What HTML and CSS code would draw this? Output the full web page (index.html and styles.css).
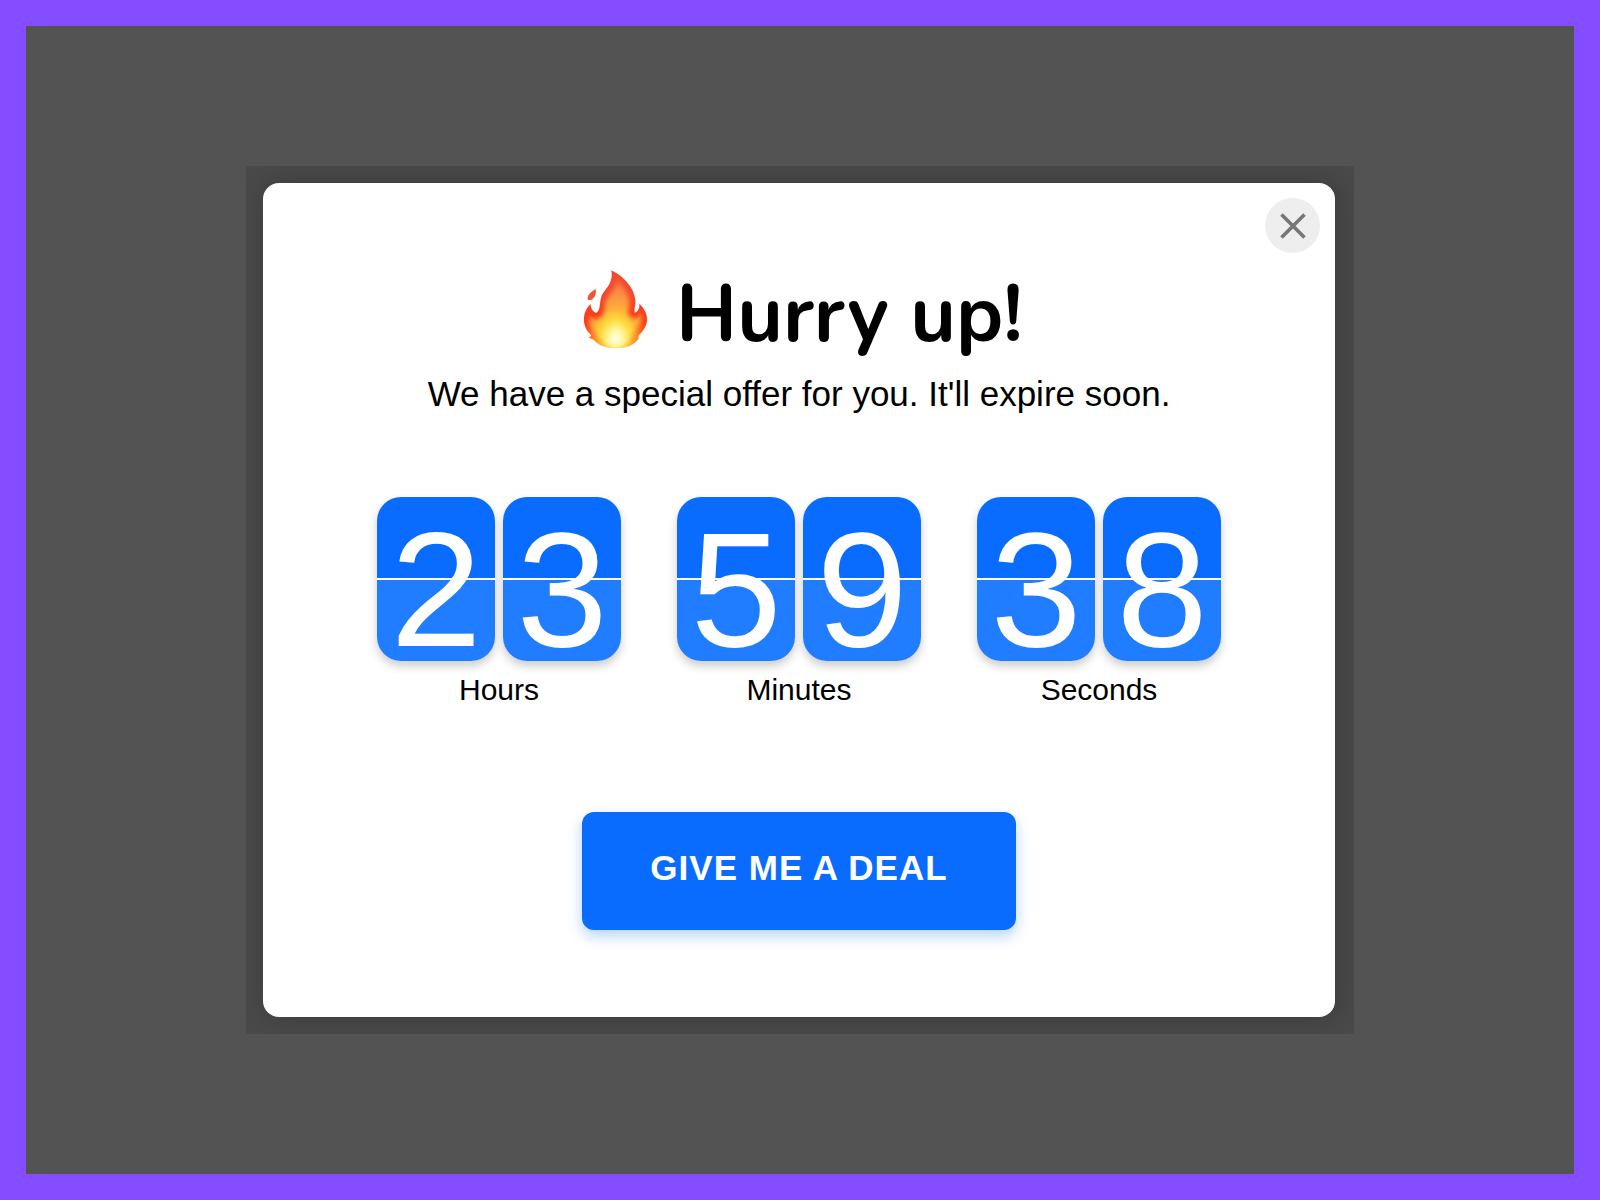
FILE: index.html
```html
<!DOCTYPE html>
<html lang="en">
<head>
    <meta charset="UTF-8">
    <meta name="viewport" content="width=device-width, initial-scale=1.0">
    <title>Hurry up!</title>
    <link rel="stylesheet" href="styles.css">
</head>
<body>
    <div class="overlay">
        <div class="popup-frame">
            <div class="popup" role="dialog" aria-labelledby="popupTitle">
                <button class="close" type="button" aria-label="Close">
                    <svg viewBox="0 0 26 26" width="26" height="26">
                        <path d="M1.5 1.5 24.5 24.5M24.5 1.5 1.5 24.5" fill="none" stroke="#777" stroke-width="3.6"/>
                    </svg>
                </button>

                <div class="title">
                    <svg class="flame" viewBox="72 60 196 238" aria-hidden="true">
                        <defs>
                            <radialGradient id="flameFill" gradientUnits="userSpaceOnUse" cx="171" cy="268" r="200" gradientTransform="translate(34 0) scale(.8 1)">
                                <stop offset="0" stop-color="#fffff0"/>
                                <stop offset=".12" stop-color="#fff9a8"/>
                                <stop offset=".27" stop-color="#ffe03e"/>
                                <stop offset=".45" stop-color="#ffae38"/>
                                <stop offset=".7" stop-color="#fb8a44"/>
                                <stop offset="1" stop-color="#f56038"/>
                            </radialGradient>
                            <radialGradient id="flameEdge" gradientUnits="userSpaceOnUse" cx="171" cy="290" r="170">
                                <stop offset="0" stop-color="#ffe03c"/>
                                <stop offset=".4" stop-color="#ff8a24"/>
                                <stop offset=".65" stop-color="#fb3c1c"/>
                                <stop offset="1" stop-color="#f5492f"/>
                            </radialGradient>
                            <filter id="flameSoft">
                                <feGaussianBlur stdDeviation="6"/>
                            </filter>
                            <clipPath id="flameClip">
                                <path id="flameShape" d="M157 62C190 76 229 116 230 154C230 169 226 180 228 190C238 188 243 175 242 163C256 176 266 194 265 212C264 232 252 248 240 258L239 270C222 290 202 297 172 297C142 297 121 291 104 272L90 266L97 258C82 246 73 226 75 204C76 188 83 174 95 164C95 178 103 190 113 190C125 184 121 160 128 140C136 119 166 101 157 62Z"/>
                            </clipPath>
                        </defs>
                        <use href="#flameShape" fill="url(#flameEdge)"/>
                        <g clip-path="url(#flameClip)">
                            <path filter="url(#flameSoft)" fill="url(#flameFill)" d="M170 90C190 106 211 130 212 155C212 177 204 190 216 208C230 212 244 200 249 192C252 208 246 226 226 250C211 290 195 297 171 297C145 297 124 285 114 256C96 238 88 218 91 200C98 209 110 214 124 208C142 194 133 166 145 146C156 128 176 114 170 90Z"/>
                        </g>
                        <path fill="#f4553a" d="M110 119C113 132 109 145 99 150C91 154 84 151 86 144C89 133 101 124 110 119Z"/>
                    </svg>
                    <h1 id="popupTitle">Hurry up!</h1>
                </div>
                <p class="subtitle">We have a special offer for you. It'll expire soon.</p>

                <div class="timer">
                    <div class="unit">
                        <div class="digits">
                            <span class="digit">2</span>
                            <span class="digit">3</span>
                        </div>
                        <div class="label">Hours</div>
                    </div>
                    <div class="unit">
                        <div class="digits">
                            <span class="digit">5</span>
                            <span class="digit">9</span>
                        </div>
                        <div class="label">Minutes</div>
                    </div>
                    <div class="unit">
                        <div class="digits">
                            <span class="digit">3</span>
                            <span class="digit">8</span>
                        </div>
                        <div class="label">Seconds</div>
                    </div>
                </div>

                <button class="deal-button" type="button">GIVE ME A DEAL</button>
            </div>
        </div>
    </div>
</body>
</html>
```
FILE: styles.css
```css
* {
    box-sizing: border-box;
}
body {
    margin: 0;
    font-family: Helvetica, Arial, "Liberation Sans", sans-serif;
    color: #000;
}
.overlay {
    display: flex;
    justify-content: center;
    align-items: center;
    min-height: 100vh;
    padding: 20px;
    border: 26px solid #844dff;
    background-color: #535353;
}
.popup-frame {
    width: 100%;
    max-width: 1108px;
    padding: 17px 19px 17px 17px;
    background-color: #494949;
    overflow: hidden;
}
.popup {
    position: relative;
    display: flex;
    flex-direction: column;
    align-items: center;
    padding: 86px 20px 87px;
    background-color: #fff;
    border-radius: 16px;
    box-shadow: 3px 0 24px rgba(0, 0, 0, 0.2);
}
.close {
    position: absolute;
    top: 15px;
    right: 15px;
    display: flex;
    justify-content: center;
    align-items: center;
    width: 55px;
    height: 55px;
    padding: 0;
    border: none;
    border-radius: 50%;
    background-color: #eee;
    cursor: pointer;
}
.title {
    display: flex;
    align-items: flex-start;
    gap: 28px;
    padding-left: 8px;
}
.flame {
    width: 65px;
    height: 80px;
}
.title h1 {
    margin: 0;
    font-family: Nunito, Lato, sans-serif;
    font-size: 79px;
    font-weight: 700;
    line-height: 92px;
}
.subtitle {
    margin: 11px 0 81px;
    font-size: 35px;
    line-height: 44px;
    text-align: center;
}
.timer {
    display: flex;
    flex-wrap: wrap;
    justify-content: center;
    gap: 56px;
}
.digits {
    display: flex;
    gap: 8px;
}
.digit {
    width: 118px;
    height: 164px;
    padding-top: 22px;
    border-radius: 24px;
    background: linear-gradient(#0a6cff 81px, #fff 81px, #fff 83px, #207dff 83px);
    box-shadow: 0 5px 10px rgba(0, 0, 0, 0.2);
    color: #fff;
    font-size: 164px;
    line-height: 142px;
    text-align: center;
}
.label {
    margin-top: 11px;
    font-size: 30px;
    line-height: 36px;
    text-align: center;
}
.deal-button {
    margin-top: 104px;
    padding: 34px 68px 40px;
    border: none;
    border-radius: 12px;
    background-color: #0a6cff;
    box-shadow: 0 6px 14px rgba(10, 108, 255, 0.3);
    color: #fff;
    font-family: inherit;
    font-size: 35px;
    font-weight: 700;
    line-height: 44px;
    letter-spacing: 1px;
    cursor: pointer;
}
```
